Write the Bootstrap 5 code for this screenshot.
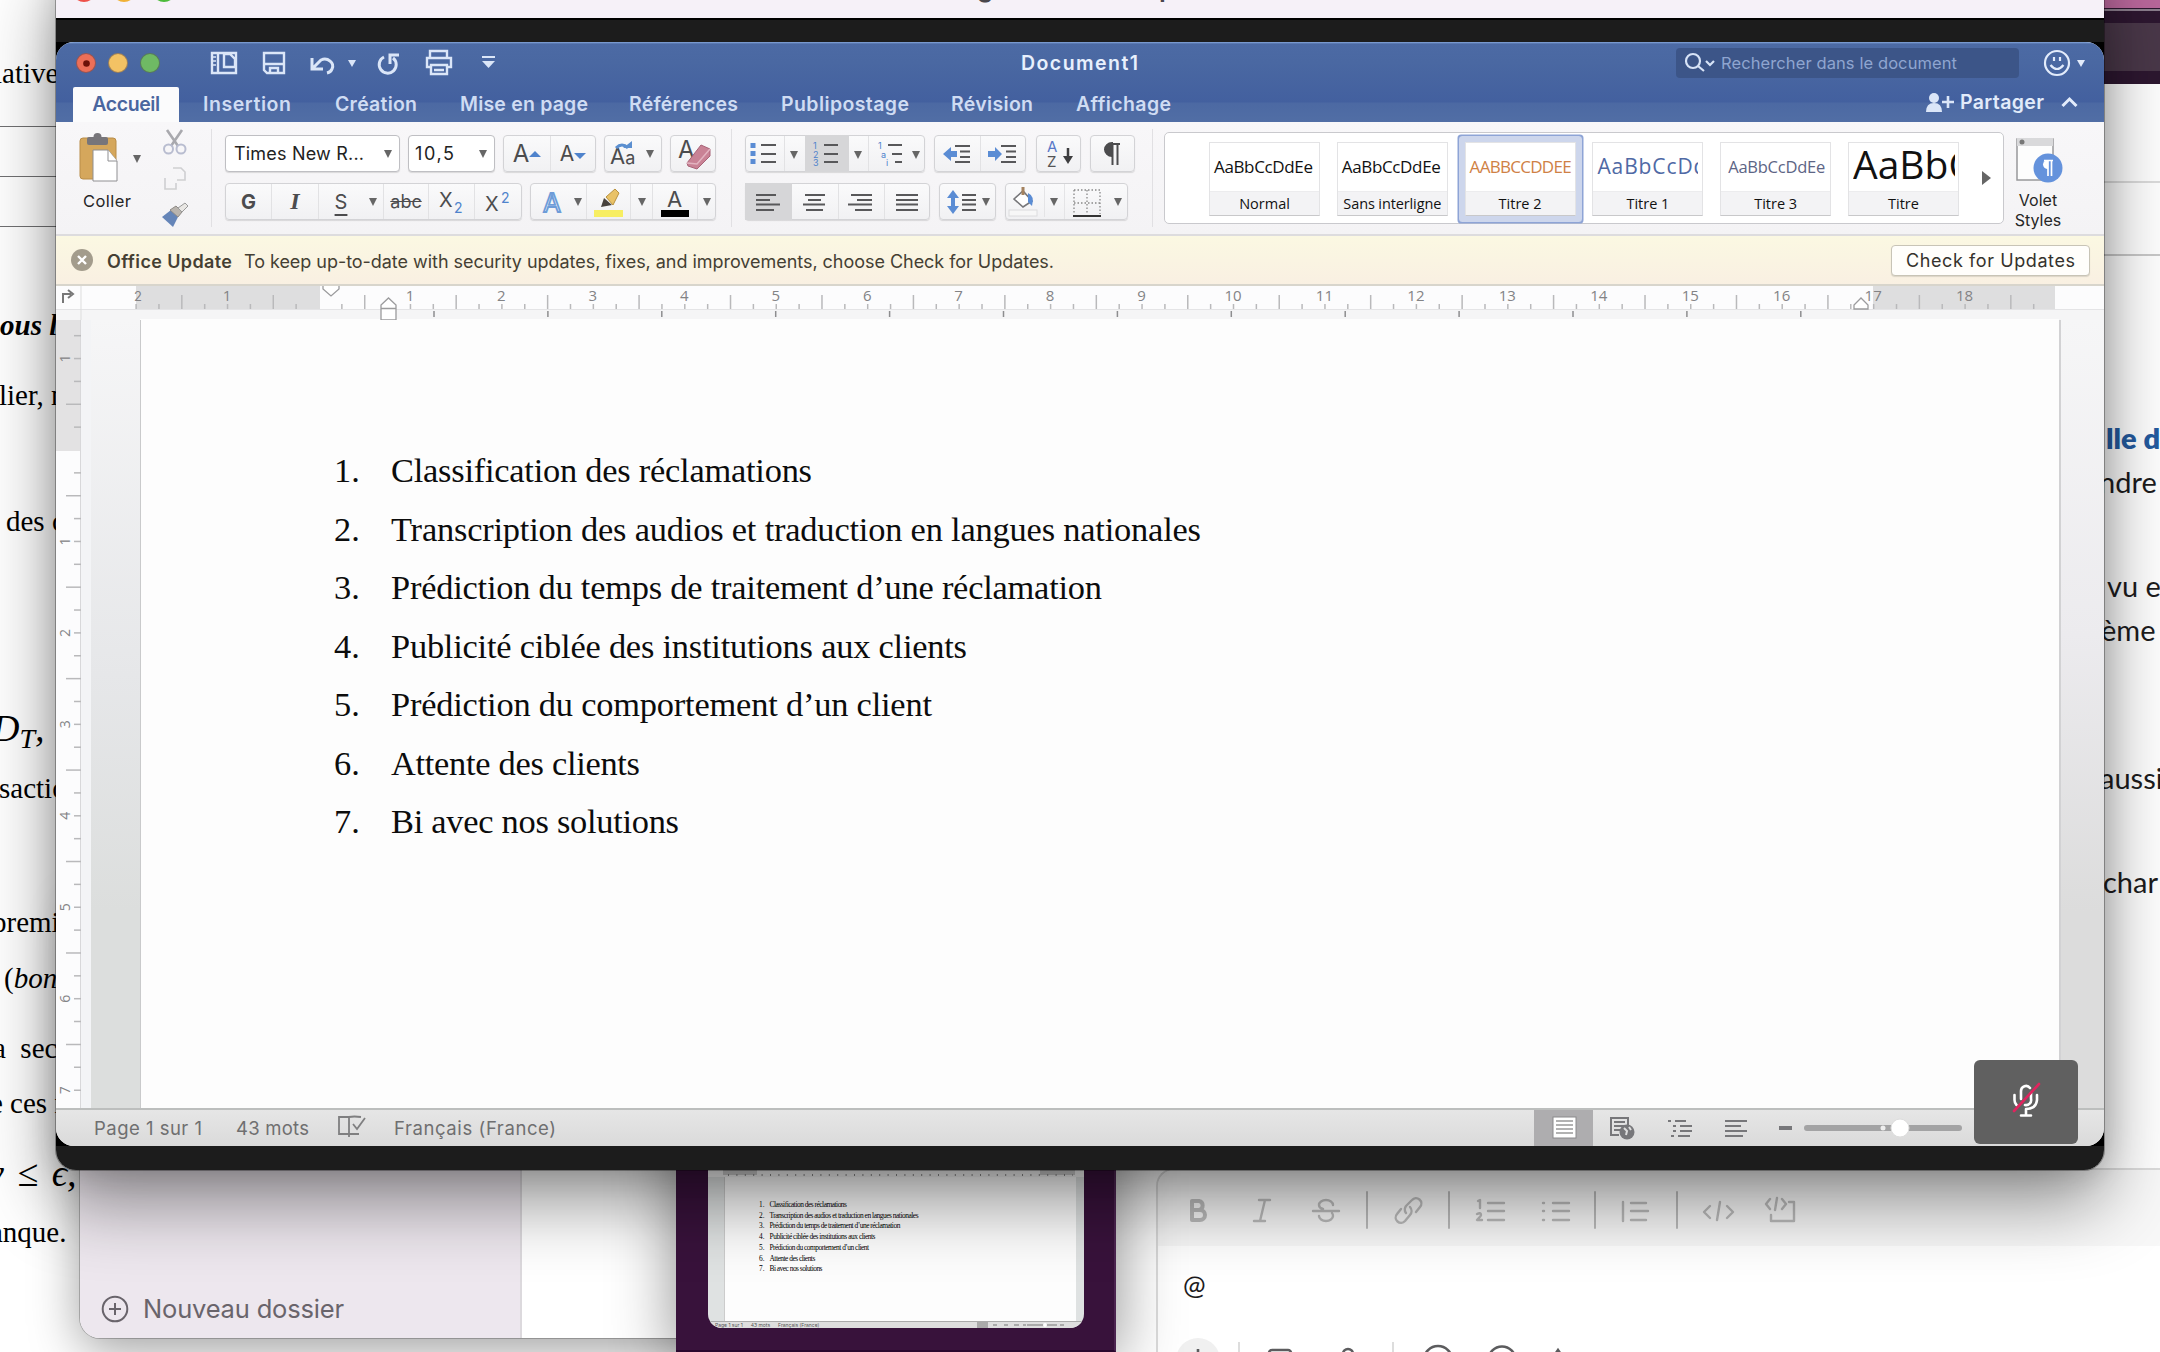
<!DOCTYPE html>
<html lang="fr">
<head>
<meta charset="utf-8">
<title>Document1</title>
<link rel="stylesheet" href="https://cdn.jsdelivr.net/npm/bootstrap@5.3.0/dist/css/bootstrap.min.css">
<style>
html,body{width:2160px;height:1352px;overflow:hidden;margin:0;background:#fff}
body{position:relative;font-family:Inter,"Liberation Sans",sans-serif;color:#222}
svg{display:block;flex:none;overflow:visible}
p{margin:0;white-space:pre}
[data-fit]{display:inline-block;white-space:nowrap;flex:none}
.win{position:absolute;overflow:hidden}
/* text document at the far left */
.paper{left:0;top:0;width:110px;height:1352px;padding-top:53px;font:29px/40px "Liberation Serif",serif;color:#000}
.paper p{height:40px}
.rules{height:212px;padding-top:33px}
.rules i{display:block;height:50px;border-top:1.5px solid #707072;width:90px}
.math{font-size:38px;font-style:italic;font-family:"Liberation Serif","DejaVu Serif",serif}
.math sub{font-size:28px;bottom:-.25em}
/* notes window */
.notes{left:80px;top:900px;width:700px;height:438px;border-radius:0 0 0 20px;background:#fff;box-shadow:0 0 0 1px rgba(0,0,0,.22),0 12px 50px rgba(0,0,0,.38)}
.notes aside{width:442px;background:#ede7ee;border-right:2px solid #dcd9dd;padding:0 0 13px 21px;color:#69646b}
/* purple video window */
.call{left:676px;top:900px;width:440px;height:452px;background:#38123b;border-right:2px solid #4c2450;border-bottom:2px solid #2a082e;box-shadow:0 8px 60px rgba(0,0,0,.45)}
.thumb{width:376px;height:428px;margin-left:32px;border-radius:14px;overflow:hidden;background:#dfe2e2;padding-top:270px}
.thumb .sheet{height:144px;margin:0 8px 0 16px;background:#fdfdfd;border-left:1px solid #ccc;padding:23px 0 0 34px;font:7.4px/10.7px "Liberation Serif",serif;color:#000}
.thumb .sheet span:first-child{display:inline-block;width:10.5px}
.thumb .tstat{height:7px;border-top:1px solid #aaa;background:#dedede;font-size:5px;line-height:6px;color:#555;padding:0 7px}
/* chat window */
.chat{left:1116px;top:0;width:1044px;height:1352px;background:#fff;font-family:Lato,sans-serif;color:#1d1c1d}
.chathead{height:84px;background:#2d1730;border-top:8px solid #b9679b}
.chathead div{height:48px;margin-top:13px;background:#4a3849}
.chathead hr{margin:0;height:2px;background:#8a7d8c;border:0;opacity:1;position:relative;top:1px}
.chatlines{padding-left:988px;font-size:29px;line-height:44px}
.editor{margin-left:40px;border:2px solid #dcdcdc;border-right:0;border-radius:18px 0 0 0;height:190px;overflow:hidden}
.editor .tools{height:76px;background:#f8f8f8}
/* screen share window */
.share{left:56px;top:-40px;width:2048px;height:1210px;border-radius:20px;background:#1c1c1c}
.shade{position:absolute;left:56px;top:-40px;width:2048px;height:1210px;border-radius:20px;box-shadow:0 0 0 1px rgba(0,0,0,.3),0 0 30px rgba(0,0,0,.15),0 32px 72px rgba(0,0,0,.44)}
.sharebar{height:60px;background:#f6f1f8;border-bottom:2px solid #000;position:relative;font:600 26px/40px Inter,sans-serif;color:#4a464c}
.sharebar b{position:absolute;top:18px;font-weight:600;line-height:20px}
.blackbox{margin-top:22px;height:1104px;background:#000}
.word{height:1104px;border-radius:18px;overflow:hidden;background:#f6f5f7}
.bluebar{height:80px;background:linear-gradient(#86a8dc 0,#4c6aa4 2px,#4a68a2 20px,#43609f 60px,#4c69a3 61px,#516ea5 80px);color:#dfe8f8}
.titlerow{height:45px;padding:0 0 3px 20px}
.dot{width:20px;height:20px;border-radius:50%;border:1px solid rgba(60,50,70,.45)}
.doctitle{font-weight:600;font-size:19.5px;color:#e8f0fd;padding-top:1px}
.find{width:343px;height:30px;background:#3c5588;border-radius:4px;color:#8fa5d0;font-size:16.5px}
.tabs{height:35px;font-size:19.5px;font-weight:600;line-height:34px;color:#cfdcf3}
.tabs .on{background:#fbfbfc;color:#49669f;height:35px;width:106px;border-radius:2px 2px 0 0;text-align:center}
.ribbon{height:114px;background:linear-gradient(#f8f7f9,#f4f3f5);border-bottom:2px solid #dddcde;color:#222}
.vsep{width:1px;height:98px;background:#e1e0e3;margin-top:7px;flex:none}
.grp{height:37px;border:1px solid #d3d3d6;border-radius:4px;background:linear-gradient(#fafafb,#f1f1f3);box-shadow:0 1px 1px rgba(0,0,0,.12);display:flex;align-items:stretch;flex:none;color:#4c4c4e;font-size:21px}
.grp.fld{background:#fff;border-color:#bfbfc3;color:#222;font-size:18px}
.cell{display:flex;align-items:center;justify-content:center;flex:none}
.cell+.cell.ln{border-left:1px solid #e2e2e4}
.gallery{width:840px;height:92px;margin:10px 0 0 11px;background:#fff;border:1px solid #c9c9cd;border-radius:5px;padding:9px 0 0 44px;gap:16.8px;flex:none}
.sty{width:111px;height:74px;border:1px solid #e3e3e5;border-bottom-color:#c8c8ca;flex:none;background:#fff;font-family:"Open Sans",sans-serif;color:#111}
.sty .smp{height:48px;padding-left:4px;overflow:hidden;white-space:nowrap;display:flex;align-items:center}
.sty .lbl{height:24px;background:#f3f3f5;border-top:1px solid #ececee;font-size:14.5px;line-height:23px;text-align:center}
.sty.sel{box-shadow:0 0 0 6px #cdd6ec,0 0 0 7.500px #8ea4d6;border-radius:1px}
.notice{height:50px;background:linear-gradient(#fbf8e2,#f9f0e2);border-bottom:2px solid #d8d5cc;font-family:Inter,"Liberation Sans",sans-serif;font-size:18px;color:#453f33;padding:0 14px}
.notice .upd{width:199px;height:31px;background:#fffefb;border:1px solid #c8c4b6;border-radius:4px;box-shadow:0 1px 1px rgba(0,0,0,.12);color:#35322c;text-align:center;line-height:29px}
.body1{height:788px}
.strip{width:10px;background:#f3f4f6}
.deskl{width:49px;background:linear-gradient(#f6f6f7,#e6e7e9 45%,#dcdedd 75%)}
.deskr{width:45px;background:linear-gradient(#f6f6f7,#ecebee 40%,#dcdcdc 75%);border-left:2px solid #d2d2d4}
.page{width:1919px;background:#fdfdfd;border-left:1px solid #c9cacb;padding:121px 0 0 193px;font-family:"Liberation Serif",serif;font-size:34.4px;color:#0c0c0c}
.page div{height:58.5px;line-height:58.5px}
.page div span:first-child{width:57px;display:inline-block}
.stat{height:38px;border-top:2px solid #bcbebd;background:linear-gradient(#e6e6e6,#dadada);font-size:18.5px;color:#6f6f70;position:relative;padding-left:38px}
.stat span{padding-top:2px}
.mic{position:absolute;left:1918px;top:1100px;width:104px;height:84px;border-radius:6px;background:#606060}
</style>
<script src="https://cdn.jsdelivr.net/npm/bootstrap@5.3.0/dist/js/bootstrap.bundle.min.js"></script>
</head>
<body>

<section class="win paper">
  <p style="text-indent:-6px">lative</p>
  <div class="rules"><i></i><i></i><i></i></div>
  <p><b><i>ous l</i></b></p>
  <p style="margin-top:30px;text-indent:-1px">lier, n</p>
  <p style="margin-top:86px;text-indent:6px">des c</p>
  <p class="math" style="margin-top:168px;text-indent:-8px;height:41px;line-height:38px">D<sub>T</sub>,</p>
  <p style="margin-top:18px;text-indent:-1px">saction</p>
  <p style="margin-top:94px;text-indent:-8px">premie</p>
  <p style="margin-top:16px;text-indent:4px">(<i>bonn</i></p>
  <p style="margin-top:30px;text-indent:-7px">a  seco</p>
  <p style="margin-top:15px;text-indent:-10px">e ces m</p>
  <p class="math" style="margin-top:31px;text-indent:-13px;height:41px;line-height:39px;word-spacing:4px">v ≤ ϵ,</p>
  <p style="margin-top:17px;text-indent:-10px">anque.</p>
</section>

<section class="win notes d-flex">
  <aside class="d-flex align-items-end">
    <div class="d-flex align-items-center">
      <svg width="28" height="28" fill="none" stroke="#69646b" stroke-width="2"><circle cx="14" cy="14" r="12.3"/><path d="M14 8v12M8 14h12"/></svg>
      <span style="font-size:25.5px;line-height:32px;margin-left:14px" data-fit="201">Nouveau dossier</span>
    </div>
  </aside>
</section>

<section class="win chat">
  <div class="chathead"><hr><div></div></div>
  <div style="height:99px;border-bottom:2px solid #dcdcdc"></div>
  <div style="height:73px;border-bottom:2px solid #c9c9c9"></div>
  <div class="chatlines" style="height:912px;padding-top:138px">
    <p style="margin-top:22px;color:#245a9e;text-indent:2px"><b style="font-weight:800">lle de</b></p>
    <p style="text-indent:-5px">ndre l</p>
    <p style="margin-top:60px;text-indent:3px">vu en</p>
    <p style="text-indent:-3px">ème d</p>
    <p style="margin-top:104px;text-indent:-4px">aussi</p>
    <p style="margin-top:60px;text-indent:-1px">char</p>
  </div>
  <div class="editor">
    <div class="tools">
      <svg width="1001" height="76" viewBox="1158 1170 1001 76" fill="none" stroke="#bcbcbc" stroke-width="2.4" stroke-linecap="round" stroke-linejoin="round">
        <path stroke-width="4" d="M1192 1201v19h8a5 5 0 0 0 0-10h-8h7a4.6 4.6 0 0 0 0-9z"/>
        <path d="M1259 1200h11M1254 1221h11M1265 1200l-5 21"/>
        <path d="M1313 1211h26M1333 1205a7 5 0 0 0-14 0q0 3 4 4M1319 1216a7 5 0 0 0 14 0q0-2-1-3"/>
        <path stroke-width="2" d="M1367 1192v36M1449 1192v36M1595 1192v36M1677 1192v36"/>
        <path d="M1406 1213a6 6 0 0 1 0-7l6-6a5 5 0 0 1 8 7l-4 5M1410 1207a6 6 0 0 1 0 8l-5 6a5 5 0 0 1-8-7l4-5"/>
        <path d="M1488 1203h16M1488 1211h16M1488 1220h16M1478 1201l2-1v8M1477 1214q4-2 4 1q0 1-4 5h5"/>
        <path d="M1553 1203h16M1553 1211h16M1553 1220h16M1543 1203h1M1543 1211h1M1543 1220h1"/>
        <path d="M1623 1202v19M1631 1203h15M1631 1211h17M1631 1220h15"/>
        <path d="M1710 1206l-6 6 6 6M1727 1206l6 6-6 6M1720 1202l-3 18"/>
        <path d="M1770 1199l-4 5 4 5M1782 1199l4 5-4 5M1777 1198l-2 12M1771 1215v6h23v-19h-5"/>
      </svg>
    </div>
    <div style="font-size:27px;line-height:34px;padding:22px 0 0 25px;height:92px">@</div>
    <svg width="1001" height="30" viewBox="1158 1338 1001 30" fill="none" stroke="#5c5c5e" stroke-width="2.6">
      <circle cx="1198" cy="1360" r="22" fill="#f0f0f0" stroke="none"/><path d="M1198 1349v20"/>
      <path d="M1239 1342v20M1393 1342v20" stroke="#ddd" stroke-width="2"/>
      <rect x="1269" y="1350" width="22" height="20" rx="3"/><path d="M1343 1360v-6a5 5 0 0 1 10 0v6"/>
      <circle cx="1438" cy="1360" r="14"/><circle cx="1502" cy="1360" r="13.5"/><path d="M1556 1353l2-3 2 3"/>
    </svg>
  </div>
</section>

<section class="win call">
  <div class="thumb d-flex flex-column">
    <svg width="376" height="7"><rect width="376" height="7" fill="#f4f4f4"/><rect x="15" width="34" height="5" fill="#ccc"/><rect x="332" width="35" height="5" fill="#ccc"/><path d="M20 5h345" stroke="#888" stroke-width="2" stroke-dasharray="1 7.4"/></svg>
    <div class="sheet" id="mini"></div>
    <div class="tstat d-flex"><span class="me-2">Page 1 sur 1</span><span class="me-2">43 mots</span><span>Français (France)</span>
      <svg class="ms-auto" width="100" height="6"><rect width="11" height="6" fill="#aaa"/><path d="M16 3h4M27 3h4M37 3h5M46 3h3M50 3h30M83 3h4" stroke="#777"/><circle cx="68" cy="3" r="2" fill="#fff"/></svg></div>
  </div>
</section>

<div class="shade"></div>
<section class="win share">
  <div class="sharebar">
    <svg width="160" height="58"><circle cx="28" cy="30" r="12" fill="#ee5149"/><circle cx="68" cy="30" r="12" fill="#f0b135"/><circle cx="108" cy="30" r="12" fill="#4cbb3a"/></svg>
    <b style="left:921px">g</b><b style="left:1103px">p</b>
  </div>
  <div class="blackbox"><div class="word">
    <header class="bluebar">
      <div class="titlerow d-flex align-items-center">
        <div class="d-flex" style="gap:12px;width:135px">
          <span class="dot d-flex align-items-center justify-content-center" style="background:#ec6f58"><svg width="7" height="7"><circle cx="3.5" cy="3.5" r="3.3" fill="#6d1208"/></svg></span>
          <span class="dot" style="background:#f3c264"></span><span class="dot" style="background:#6fb964"></span>
        </div>
        <svg width="290" height="30" viewBox="211 48 290 30" fill="none" stroke="#dbe6f8" stroke-width="2.4">
          <path d="M212 53h24v20h-24zM218 53v20M224 54v13h11v-8l-5-5h-6"/><path d="M213 57h3M213 61h3M213 65h3" stroke-width="1.6"/>
          <path d="M264 53h20v20h-17l-3-3zM264 64h20M270 73v-5h8v5"/>
          <path d="M312 58v11h11M313 68l8-8a8 7 0 0 1 11 9q-1 3-5 4" stroke-width="3"/>
          <path d="M348 60h8l-4 7z" fill="#dbe6f8" stroke="none"/>
          <path d="M384 57a8.5 8.5 0 1 0 9 1M390 64v-9h9" stroke-width="3"/>
          <path d="M430 59v-8h17v8M431 67h-4v-9h24v9h-4M431 65h16v9h-16zM434 70h10"/>
          <path d="M482 57h13" stroke-width="2"/><path d="M482 61h13l-6.500 7z" fill="#dbe6f8" stroke="none"/>
        </svg>
        <span class="doctitle" data-fit="117" style="margin-left:520px">Document1</span>
        <div class="find d-flex align-items-center" style="margin-left:538px">
          <svg width="45" height="30" fill="none" stroke="#d7e3f7" stroke-width="2.2"><circle cx="17" cy="13" r="7"/><path d="M22 18l6 5M30 13l4 4 4-4"/></svg>
          <span data-fit="236">Rechercher dans le document</span>
        </div>
        <svg width="44" height="28" style="margin-left:25px" fill="none" stroke="#e3ecfb" stroke-width="2.2"><circle cx="13" cy="14" r="12"/><path d="M6.500 16q6.500 8 13 0M10 8v4M16 8v4"/><path d="M33 11h8l-4 7z" fill="#e3ecfb" stroke="none"/></svg>
      </div>
      <nav class="tabs d-flex" style="padding-left:17px">
        <span class="on"><span data-fit="68">Accueil</span></span>
        <span data-fit="88" style="margin-left:24px">Insertion</span><span data-fit="82" style="margin-left:44px">Création</span><span data-fit="128" style="margin-left:43px">Mise en page</span><span data-fit="109" style="margin-left:41px">Références</span><span data-fit="128" style="margin-left:43px">Publipostage</span><span data-fit="82" style="margin-left:42px">Révision</span><span data-fit="95" style="margin-left:43px">Affichage</span>
        <svg width="30" height="22" viewBox="0 0 30 22" style="margin:4px 4px 0 auto" fill="#dbe6f8"><circle cx="8" cy="7" r="5"/><path d="M0 21q0-9 8-9t8 9z"/><path d="M22 5v12M16 11h12" stroke="#dbe6f8" stroke-width="2.6"/></svg>
        <span data-fit="84" style="color:#e2ebfa;line-height:31px">Partager</span>
        <svg width="17" height="12" style="margin:9px 26px 0 17px" fill="none" stroke="#e3ecfb" stroke-width="3"><path d="M1.500 10l7-7 7 7"/></svg>
      </nav>
    </header>

    <div class="ribbon d-flex">
      <div class="d-flex" style="width:155px;padding:10px 0 0 23px">
        <div style="width:62px;flex:none">
          <svg width="62" height="52" viewBox="79 132 62 52"><rect x="80" y="138" width="36" height="41" rx="3" fill="#d5a75c" stroke="#b98d48"/><rect x="87" y="137" width="21" height="8" rx="2" fill="#77757a"/><circle cx="97.500" cy="137" r="4" fill="#77757a"/><path d="M93 150h15l9 11v20H93z" fill="#fff" stroke="#8f8f92"/><path d="M108 150v11h9" fill="#fff" stroke="#8f8f92"/><path d="M133 155h8l-4 8z" fill="#666"/></svg>
          <span data-fit="48" style="font-size:16.500px;margin-left:4px;line-height:32px;color:#262626;margin-top:1px">Coller</span>
        </div>
        <svg width="34" height="100" viewBox="159 132 34 100" style="margin-left:18px" fill="none" stroke="#a9a9ae" stroke-width="2"><path d="M167 130l11 16M182 130l-11 16" stroke-width="2.600"/><circle cx="168.500" cy="149" r="4.500" stroke="#b9bdd0"/><circle cx="181" cy="149" r="4.500" stroke="#b9bdd0"/>
          <path d="M173 168h8l4 4v8h-8M165 178v11h11v-6" stroke="#cfcfd1" stroke-width="1.600"/>
          <path d="M162 217l9-7 7 7-5 10z" fill="#6585b8" stroke="none"/><path d="M170 210l6-4 6 6-4 5z" fill="#b9b4ae" stroke="#8e8a86" stroke-width="1"/><path d="M178 208l7-5 3 3-6 6z" fill="#e9e7e4" stroke="#999" stroke-width="1"/></svg>
      </div>
      <div class="vsep"></div>

      <div style="width:519px;padding:13px 0 0 13px">
        <div class="d-flex" style="gap:8px">
          <div class="grp fld" style="width:175px"><div class="cell" style="width:152px;justify-content:start;padding-left:8px"><span data-fit="130">Times New R...</span></div><div class="cell" data-caret></div></div>
          <div class="grp fld" style="width:87px"><div class="cell" style="width:64px;justify-content:start;padding-left:6px"><span data-fit="39">10,5</span></div><div class="cell" data-caret></div></div>
          <div class="grp" style="width:93px">
            <div class="cell" style="width:46px;font-size:24px">A<svg width="12" height="8"><path d="M0 7l6-6 6 6z" fill="#4f83cc"/></svg></div>
            <div class="cell ln" style="width:45px;font-size:21px">A<svg width="12" height="8"><path d="M0 3h12l-6 6z" fill="#4f83cc"/></svg></div></div>
          <div class="grp" style="width:58px"><div class="cell" style="width:36px;font-size:20px"><svg width="34" height="34"><text x="4" y="27" fill="#4c4c4e" font-size="22">A<tspan font-size="18">a</tspan></text><path d="M10 11q6-6 12 0" fill="none" stroke="#5b8fd0" stroke-width="3"/><path d="M17 11h9V4z" fill="#5b8fd0"/></svg></div><div class="cell" data-caret style="width:18px"></div></div>
          <div class="grp" style="width:46px"><svg width="44" height="35"><text x="7" y="22" fill="#4c4c4e" font-size="24">A</text><path d="M16 27L30 9l9 4v7L26 33l-9-3z" fill="#c98295" stroke="#a86478"/><path d="M16 27l10 1 13-15" fill="none" stroke="#e2b3c0" stroke-width="1.500"/></svg></div>
        </div>
        <div class="d-flex" style="gap:8px;margin-top:11px">
          <div class="grp" style="width:297px">
            <div class="cell" style="width:45px;font-weight:700;font-size:20px">G</div>
            <div class="cell ln" style="width:47px;font:italic 24px 'Liberation Serif',serif;font-weight:700">I</div>
            <div class="cell ln" style="width:45px;font-size:20px;text-decoration:underline;text-underline-offset:5px">S</div>
            <div class="cell" data-caret style="width:20px"></div>
            <div class="cell ln" style="width:45px;font-size:18px;text-decoration:line-through">abc</div>
            <div class="cell ln" style="width:46px"><svg width="28" height="34"><text x="1" y="22" font-size="20" fill="#4c4c4e">X</text><text x="16" y="28" font-size="14" fill="#4f83cc">2</text></svg></div>
            <div class="cell ln" style="width:46px"><svg width="28" height="34"><text x="1" y="26" font-size="20" fill="#4c4c4e">X</text><text x="17" y="18" font-size="14" fill="#4f83cc">2</text></svg></div>
          </div>
          <div class="grp" style="width:186px">
            <div class="cell" style="width:38px;padding-left:8px"><svg width="28" height="34"><text x="3" y="27" font-size="26" fill="#fff" stroke="#6d9cd8" stroke-width="1.800">A</text></svg></div><div class="cell" data-caret style="width:17px"></div>
            <div class="cell ln" style="width:44px"><svg width="32" height="34"><rect x="1" y="25" width="29" height="7" fill="#f7ee62"/><path d="M8 22l3-9 8 7z" fill="#47423d"/><path d="M13 12l9-8 4 4-6 12z" fill="#e9c267" stroke="#b9923f"/></svg></div><div class="cell ln" data-caret style="width:22px"></div>
            <div class="cell ln" style="width:45px"><svg width="30" height="34"><rect x="1" y="25" width="28" height="7" fill="#000"/><text x="7" y="22" font-size="22" fill="#4c4c4e">A</text></svg></div><div class="cell ln" data-caret style="width:18px"></div>
          </div>
        </div>
      </div>
      <div class="vsep"></div>

      <div style="width:420px;padding:13px 0 0 13px">
        <div class="d-flex">
          <div class="grp" style="width:180px">
            <svg width="178" height="35" viewBox="746 136 178 35" fill="none" stroke="#58585a" stroke-width="2">
              <rect x="805" y="135" width="44" height="37" fill="#d6d6d8" stroke="none"/>
              <path d="M761 145h15M761 154h15M761 162h15M824 145h14M824 154h14M824 162h14M888 145h14M892 154h10M895 162h7"/>
              <g fill="#5a8cd4" stroke="none"><rect x="750.500" y="143" width="5" height="5"/><rect x="750.500" y="151" width="5" height="5"/><rect x="750.500" y="159" width="5" height="5"/></g>
              <g fill="#4f83cc" stroke="none" font-size="9"><text x="813" y="149">1</text><text x="813" y="157.500">2</text><text x="813" y="166">3</text><text x="878" y="149">1</text><text x="881" y="158">a</text><text x="886" y="166">i</text></g>
              <path d="M784.500 136v35M868.500 136v35" stroke="#e2e2e4" stroke-width="1"/>
              <path d="M790 151h8l-4 8zM854 151h8l-4 8zM912 151h8l-4 8z" fill="#666" stroke="none"/>
            </svg></div>
          <div class="grp" style="width:92px;margin-left:9px">
            <svg width="90" height="35" viewBox="935 136 90 35" fill="none" stroke="#58585a" stroke-width="2"><path d="M955 146h15M960 151.500h10M960 157h10M955 162h15M1001 146h15M1006 151.500h10M1006 157h10M1001 162h15"/><path d="M943 154l8-7v4h6v6h-6v4zM1002 154l-7-7v4h-7v6h7v4z" fill="#5a8cd4" stroke="none"/><path d="M980.500 136v35" stroke="#e2e2e4" stroke-width="1"/></svg></div>
          <div class="grp" style="width:45px;margin-left:10px"><svg width="43" height="35"><text x="10" y="16" font-size="15" fill="#5a78c8">A</text><text x="10" y="31" font-size="15" fill="#555">Z</text><path d="M31 12v10" stroke="#3d3d3f" stroke-width="2.500"/><path d="M26 20h10l-5 8z" fill="#3d3d3f"/></svg></div>
          <div class="grp" style="width:45px;margin-left:9px"><svg width="43" height="35"><path d="M21 7a7 6.500 0 0 0 0 13z" fill="#4c4c4e" stroke="#4c4c4e" stroke-width="2"/><path d="M19 8h10M21.500 8v21M26.500 8v21" stroke="#4c4c4e" stroke-width="2"/></svg></div>
        </div>
        <div class="d-flex" style="margin-top:11px;gap:9px">
          <div class="grp" style="width:185px">
            <svg width="183" height="35" viewBox="746 184 183 35" fill="none" stroke="#58585a" stroke-width="2"><rect x="745" y="183" width="47" height="37" fill="#d6d6d8" stroke="none"/>
              <path d="M756 195h20M756 200h14M756 204.500h24M756 210h18M805 195h20M808 200h13M803 204.500h22M806 210h17M851 195h21M857 200h15M848 204.500h24M855 210h17M896 195h22M896 200h22M896 204.500h22M896 210h22"/>
              <path d="M838.500 184v35M884.500 184v35" stroke="#e2e2e4" stroke-width="1"/></svg></div>
          <div class="grp" style="width:57px"><svg width="55" height="35" viewBox="940 184 55 35"><path d="M962 195h14M962 200h14M962 204.500h14M962 210h14" stroke="#58585a" stroke-width="2"/><path d="M953 190l6 8h-4v8h4l-6 8-6-8h4v-8h-4z" fill="#5a8cd4"/><path d="M982 198h8l-4 8z" fill="#666"/></svg></div>
          <div class="grp" style="width:123px"><svg width="121" height="35" viewBox="1006 184 121 35" fill="none"><rect x="1009" y="210" width="28" height="6" fill="#f7f7f7" stroke="#dcdcde"/><path d="M1014 199l9-8 9 10-9 6z" fill="#fff" stroke="#77777a" stroke-width="1.600"/><path d="M1023 187v8" stroke="#a4825f" stroke-width="3"/><path d="M1028 193q7 3 4 13l-4-4z" fill="#5a8cd4"/><path d="M1044.500 186v31M1064.500 184v35" stroke="#e4e4e6"/><path d="M1050 198h8l-4 8zM1114 198h8l-4 8z" fill="#666"/><path d="M1074 190h26v24M1074 190v24M1087 190v24M1074 203h26" stroke="#888" stroke-width="1.300" stroke-dasharray="1.500 2"/><path d="M1073 216h28" stroke="#333" stroke-width="2"/></svg></div>
        </div>
      </div>
      <div class="vsep"></div>

      <div class="gallery d-flex position-relative">
        <div class="sty"><div class="smp"><span data-fit="99" style="font-size:17px;font-weight:500">AaBbCcDdEe</span></div><div class="lbl">Normal</div></div>
        <div class="sty"><div class="smp"><span data-fit="99" style="font-size:17px;font-weight:500">AaBbCcDdEe</span></div><div class="lbl"><span data-fit="98">Sans interligne</span></div></div>
        <div class="sty sel"><div class="smp" style="color:#cf8145"><span data-fit="102" style="font-size:17px">AABBCCDDEE</span></div><div class="lbl">Titre 2</div></div>
        <div class="sty"><div class="smp" style="color:#4f69a5;padding-right:4px"><div class="overflow-hidden" style="width:102px"><span data-fit="109" style="font-size:21px">AaBbCcDd</span></div></div><div class="lbl">Titre 1</div></div>
        <div class="sty"><div class="smp" style="color:#5d6585;padding-left:7px"><span data-fit="97" style="font-size:16.500px">AaBbCcDdEe</span></div><div class="lbl">Titre 3</div></div>
        <div class="sty"><div class="smp"><div class="overflow-hidden" style="width:102px;line-height:48px;height:54px"><span data-fit="120" style="font-size:39px">AaBbC</span></div></div><div class="lbl">Titre</div></div>
        <svg width="10" height="14" style="margin:29px 0 0 6px"><path d="M0 0v14l9-7z" fill="#666"/></svg>
      </div>
      <div style="margin:13px 0 0 8px;width:56px;text-align:center;font-size:16px;line-height:19.500px;color:#262626">
        <svg width="48" height="50" style="margin-left:4px"><rect x="1" y="4" width="36" height="41" fill="#fdfdfd" stroke="#98989b" stroke-width="1.500"/><rect x="1" y="3" width="36" height="8" fill="#d9d9db"/><circle cx="6" cy="7" r="2.500" fill="#777"/><circle cx="32" cy="33" r="14.500" fill="#6492dc"/><path d="M32 25a5 4.500 0 0 0 0 9z" fill="#fff"/><path d="M28 25.500h9M32 25v16M35.500 25v16" stroke="#fff" stroke-width="1.700"/></svg>
        <div style="margin:6px 4px 0 0">Volet<br>Styles</div>
      </div>
    </div>

    <div class="notice d-flex align-items-center">
      <svg width="24" height="24"><circle cx="12" cy="12" r="11" fill="#a39c8c"/><path d="M8 8l8 8M16 8l-8 8" stroke="#fff" stroke-width="2.400"/></svg>
      <b data-fit="125" style="margin:2px 0 0 13px;font-weight:600">Office Update</b>
      <span data-fit="810" style="margin:2px 0 0 12px">To keep up-to-date with security updates, fixes, and improvements, choose Check for Updates.</span>
      <div class="upd ms-auto"><span data-fit="169">Check for Updates</span></div>
    </div>

    <svg id="hruler" width="2048" height="34" viewBox="56 286 2048 34"></svg>
    <div class="body1 d-flex">
      <svg id="vruler" width="25" height="788" viewBox="56 320 25 788"></svg>
      <div class="strip"></div><div class="deskl"></div>
      <main class="page flex-none" id="list"></main>
      <div class="deskr"></div>
    </div>

    <footer class="stat d-flex align-items-center">
      <span data-fit="108">Page 1 sur 1</span><span data-fit="73" style="margin-left:34px">43 mots</span>
      <svg width="28" height="24" style="margin:-4px 0 0 29px" fill="none" stroke="#7f7f80" stroke-width="1.800"><path d="M11 3H1v17h10V3q5-1 12 0M11 20h10M11 20v3M15 10l4 5 8-11"/></svg>
      <span data-fit="162" style="margin-left:28px">Français (France)</span>
      <svg width="430" height="36" viewBox="1534 1110 430 36" style="margin-left:978px" fill="none" stroke="#77777a" stroke-width="2">
        <rect x="1534" y="1110" width="59" height="36" fill="#aeadaf" stroke="none"/><rect x="1553" y="1117" width="23" height="21" fill="#fff" stroke="#8a8a8c" stroke-width="1"/><path d="M1556 1121h17M1556 1125h17M1556 1129h17M1556 1133h17" stroke="#999" stroke-width="1.600"/>
        <path d="M1619 1135h-8v-17h17v9M1614 1122h11M1614 1126h11M1614 1130h7"/><circle cx="1627" cy="1132" r="7.500" fill="#77777a" stroke="none"/><path d="M1624 1128l3 3-1 4M1629 1127l2 3" stroke="#ddd"/>
        <path d="M1668 1121h3M1675 1121h11M1673 1126h3M1680 1126h12M1673 1131h3M1680 1131h12M1671 1136h3M1678 1136h12M1725 1121h22M1725 1126h16M1725 1131h22M1725 1136h18"/>
        <path d="M1779 1128h13" stroke-width="4"/><path d="M1807 1128h152" stroke="#a3a3a4" stroke-width="6" stroke-linecap="round"/><circle cx="1883" cy="1128" r="2.500" fill="#eee" stroke="none"/><circle cx="1900" cy="1128" r="9" fill="#fff" stroke="#ddd" stroke-width="1"/>
      </svg>
    </footer>
  </div></div>
  <div class="mic d-flex align-items-center justify-content-center">
    <svg width="28" height="34" style="margin-top:-4px" fill="none" stroke="#fff" stroke-width="2.600" stroke-linecap="round"><path d="M9 16V8a5 5 0 0 1 9-3M19 10v6a5 5 0 0 1-6 6M2.500 12v5q0 3 2 5M25 12v5q-1 9-11 9M14 26v6M9 32.500h10"/><path d="M27 1L2 28" stroke="#e0245e"/></svg>
  </div>
</section>

<script>
const items=[["Classification des réclamations",421],["Transcription des audios et traduction en langues nationales",810],["Prédiction du temps de traitement d’une réclamation",711],["Publicité ciblée des institutions aux clients",576],["Prédiction du comportement d’un client",541],["Attente des clients",249],["Bi avec nos solutions",288]];
list.innerHTML=items.map((t,i)=>`<div class="d-flex"><span>${i+1}.</span><span data-fit="${t[1]}">${t[0]}</span></div>`).join("");
mini.innerHTML=items.map((t,i)=>`<div class="d-flex"><span>${i+1}.</span><span data-fit="${t[1]*.184}">${t[0]}</span></div>`).join("");
document.querySelectorAll("[data-caret]").forEach(c=>{if(!c.style.width)c.style.width="20px";c.innerHTML='<svg width="8" height="8"><path d="M0 0h8l-4 8z" fill="#666"/></svg>'});
/* horizontal ruler, one unit = 91.45px, origin at x=319 */
const U=91.45;let h='<rect x="56" y="286" width="2048" height="24" fill="#fcfcfd"/><rect x="56" y="310" width="2048" height="10" fill="#f5f5f6"/><rect x="136" y="286" width="184" height="24" fill="#dededf"/><rect x="1873" y="286" width="182" height="24" fill="#dededf"/><rect x="140" y="319" width="1919" height="1" fill="#fdfdfd"/>';
for(let q=-8;q<=75;q++){const x=319+q*U/4;if(q==0||x>2050)continue;const half=((q%4)+4)%4==2;h+=`<path d="M${x} ${half?295:304}V310" stroke="#b9b9bb" stroke-width="1.500"/>`;if(q%4==0&&q>-8)h+=`<text x="${x-.5}" y="301" text-anchor="middle" font-size="15" fill="#838385" font-family="Open Sans">${Math.abs(q/4)}</text>`}
for(let k=0;k<13;k++)h+=`<path d="M${434+k*113.9} 311v6" stroke="#8d8d8f" stroke-width="1.500"/>`;
h+='<text x="134" y="301" font-size="13" fill="#838385">2</text><path d="M56 309.500h2048" stroke="#e4e4e6"/><path d="M323 286v3l8 7 8-7v-3M381 308v-3l7.500-7 7.500 7v15h-15zM381 308.500h15M1854 309v-4l7-7 7 7v4z" fill="#fff" stroke="#9b9b9d" stroke-width="1.300"/><path d="M63 303v-9h8M68 290l5 4-5 4" fill="none" stroke="#777" stroke-width="2"/><path d="M81 286v34" stroke="#ddd"/>';
hruler.innerHTML=h;
let v='<rect x="56" y="320" width="25" height="788" fill="#fcfcfd"/><rect x="56" y="320" width="25" height="131" fill="#e3e2e3"/><path d="M80.500 320v788" stroke="#d8d8da"/>';
for(let q=-5;q<=28;q++){const y=450+q*U/4;if(q==0)continue;const m=((q%4)+4)%4;v+=`<path d="M${m==2?66:74} ${y}H81" stroke="#b9b9bb" stroke-width="1.500"/>`;if(m==0)v+=`<text transform="translate(70 ${y}) rotate(-90)" text-anchor="middle" font-size="14" fill="#838385" font-family="Open Sans">${Math.abs(q/4)}</text>`}
vruler.innerHTML=v;
/* spread each label over its column width */
document.querySelectorAll("[data-fit]").forEach(e=>{const n=e.textContent.length,w=+e.dataset.fit;e.style.letterSpacing=((w-e.getBoundingClientRect().width)/(n-1))+"px";e.style.width=w+"px"});
</script>
</body>
</html>
